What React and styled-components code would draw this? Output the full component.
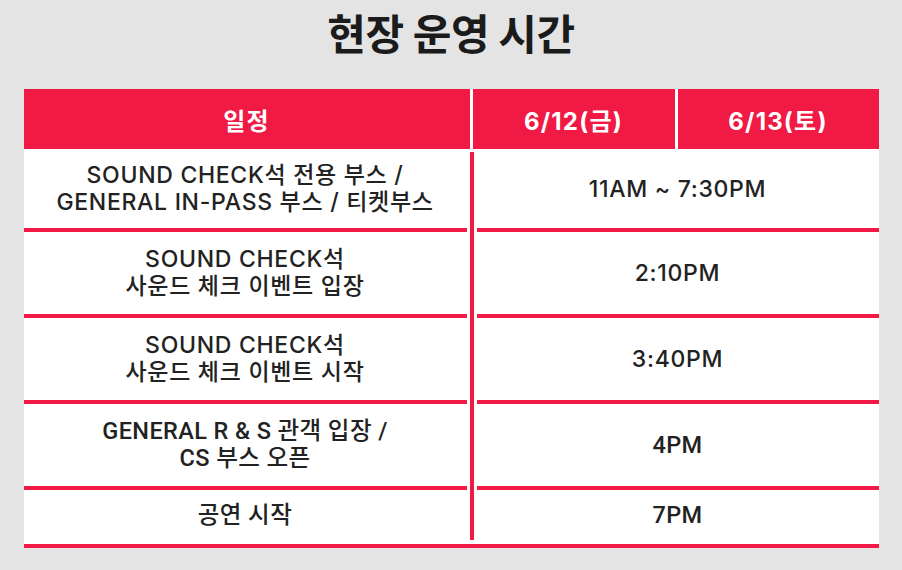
import { createGlobalStyle, styled } from "styled-components";

const GlobalStyle = createGlobalStyle`
  html, body {
    margin: 0;
    padding: 0;
    background: #e4e4e4;
  }
  body {
    font-family: Inter, "Noto Sans CJK KR", sans-serif;
    color: #222222;
  }
`;

const RED = "#f01a45";

const Page = styled.div`
  width: 902px;
  height: 570px;
  display: flex;
  flex-direction: column;
  align-items: center;
  overflow: hidden;
`;

const Title = styled.h1`
  margin: 0;
  height: 89px;
  display: flex;
  align-items: center;
  justify-content: center;
  padding-bottom: 26px;
  box-sizing: border-box;
  font-family: "Noto Sans CJK KR", sans-serif;
  font-weight: 700;
  font-size: 42px;
  letter-spacing: -0.4px;
  color: #1b1b1b;
`;

const Table = styled.div`
  width: 855px;
  background: #ffffff;
  border-bottom: 4px solid ${RED};
`;

const HeadRow = styled.div`
  display: grid;
  grid-template-columns: 446px 202px 1fr;
  column-gap: 3px;
  height: 60px;
`;

const HeadCell = styled.div`
  background: ${RED};
  color: #ffffff;
  display: flex;
  align-items: center;
  justify-content: center;
  font-family: Inter, "Noto Sans CJK KR", sans-serif;
  font-weight: 700;
  font-size: 24px;
  letter-spacing: 1.2px;
`;

const Body = styled.div`
  display: grid;
  grid-template-columns: 443px 10px 1fr;
  padding-top: 1px;
  padding-bottom: 4px;
`;

const Divider = styled.div`
  grid-column: 2;
  grid-row: 1 / span 5;
  justify-self: center;
  width: 4px;
  margin-top: 2px;
  background: ${RED};
`;

const Cell = styled.div`
  height: ${(p) => p.$h}px;
  display: flex;
  align-items: center;
  justify-content: center;
  text-align: center;
  font-family: ${(p) =>
    p.$alt
      ? `Roboto, "Noto Sans CJK KR", sans-serif`
      : `Inter, "Noto Sans CJK KR", sans-serif`};
  font-size: ${(p) => (p.$alt ? 23.5 : 23)}px;
  font-weight: 500;
  line-height: 27px;
  letter-spacing: ${(p) => (p.$alt ? "0.4px" : "0.7px")};
  border-bottom: ${(p) => (p.$last ? "none" : `4px solid ${RED}`)};
  grid-column: ${(p) => (p.$right ? 3 : 1)};
`;

const rows = [
  {
    label: ["SOUND CHECK석 전용 부스 /", "GENERAL IN-PASS 부스 / 티켓부스"],
    time: "11AM ~ 7:30PM",
    h: 78,
  },
  {
    label: ["SOUND CHECK석", "사운드 체크 이벤트 입장"],
    time: "2:10PM",
    h: 82,
  },
  {
    label: ["SOUND CHECK석", "사운드 체크 이벤트 시작"],
    time: "3:40PM",
    h: 82,
  },
  {
    label: ["GENERAL R & S 관객 입장 /", "CS 부스 오픈"],
    time: "4PM",
    h: 82,
    alt: true,
  },
  { label: ["공연 시작"], time: "7PM", h: 50, alt: true, last: true },
];

export default function App() {
  return (
    <Page>
      <GlobalStyle />
      <Title>현장 운영 시간</Title>
      <Table>
        <HeadRow>
          <HeadCell>일정</HeadCell>
          <HeadCell>6/12(금)</HeadCell>
          <HeadCell>6/13(토)</HeadCell>
        </HeadRow>
        <Body>
          <Divider />
          {rows.map((r, i) => [
            <Cell key={`l${i}`} $h={r.h} $alt={r.alt} $last={r.last} style={{ gridRow: i + 1 }}>
              <div>
                {r.label.map((t, j) => (
                  <div key={j}>{t}</div>
                ))}
              </div>
            </Cell>,
            <Cell key={`r${i}`} $h={r.h} $alt={r.alt} $last={r.last} $right style={{ gridRow: i + 1 }}>
              {r.time}
            </Cell>,
          ])}
        </Body>
      </Table>
    </Page>
  );
}
